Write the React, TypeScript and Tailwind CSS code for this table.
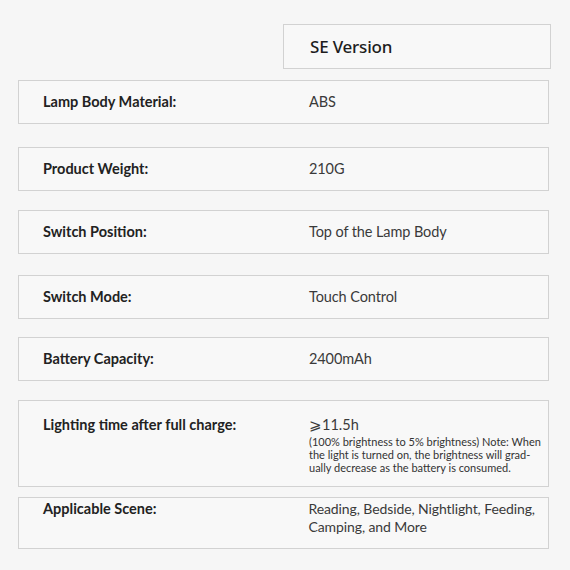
const rows = [
  { label: "Lamp Body Material:", value: "ABS", mt: "mt-[11px]", h: "h-[44px]" },
  { label: "Product Weight:", value: "210G", mt: "mt-[23px]", h: "h-[44px]" },
  { label: "Switch Position:", value: "Top of the Lamp Body", mt: "mt-[19px]", h: "h-[44px]" },
  { label: "Switch Mode:", value: "Touch Control", mt: "mt-[21px]", h: "h-[44px]" },
  { label: "Battery Capacity:", value: "2400mAh", mt: "mt-[18px]", h: "h-[44px]" },
];

function Cell({ className = "", children }: { className?: string; children: React.ReactNode }) {
  return (
    <div className={`ml-[18px] w-[531px] border border-[#d2d2d2] bg-[#f8f8f8] ${className}`}>
      {children}
    </div>
  );
}

export default function App() {
  return (
    <div
      className="h-[570px] w-[570px] overflow-hidden bg-[#f6f6f6] pt-[24px] text-[#222]"
      style={{ fontFamily: 'Lato, "Noto Sans", sans-serif' }}
    >
      <div className="ml-[283px] flex h-[45px] w-[268px] items-center border border-[#d2d2d2] bg-[#f8f8f8] pl-[26px]">
        <span className="font-['Noto_Sans',sans-serif] text-[17px] font-medium tracking-[-0.2px] text-[#1d1d1d]">
          SE Version
        </span>
      </div>

      {rows.map((row) => (
        <Cell key={row.label} className={`${row.mt} ${row.h} flex items-center`}>
          <div className="w-[290px] pl-[24px] text-[14.5px] font-bold text-[#222]">{row.label}</div>
          <div className="text-[14.5px] tracking-[-0.1px] text-[#3a3a3a]">{row.value}</div>
        </Cell>
      ))}

      <Cell className="mt-[19px] flex h-[87px] pt-[14px]">
        <div className="w-[290px] pl-[24px] text-[14.5px] leading-[20px] font-bold text-[#222]">
          Lighting time after full charge:
        </div>
        <div className="w-[236px] text-[#3a3a3a]">
          <div className="text-[14.5px] leading-[20px]">⩾11.5h</div>
          <p className="text-[11px] leading-[13px] text-[#333]">
            (100% brightness to 5% brightness) Note: When the light is turned on, the brightness will grad-ually decrease as the battery is consumed.
          </p>
        </div>
      </Cell>

      <Cell className="mt-[10px] flex h-[52px] pt-[2px]">
        <div className="w-[290px] pl-[24px] text-[14.5px] leading-[18px] font-bold text-[#222]">
          Applicable Scene:
        </div>
        <div className="w-[240px] text-[14px] leading-[18px] tracking-[-0.1px] text-[#3a3a3a]">
          Reading, Bedside, Nightlight, Feeding, Camping, and More
        </div>
      </Cell>
    </div>
  );
}
